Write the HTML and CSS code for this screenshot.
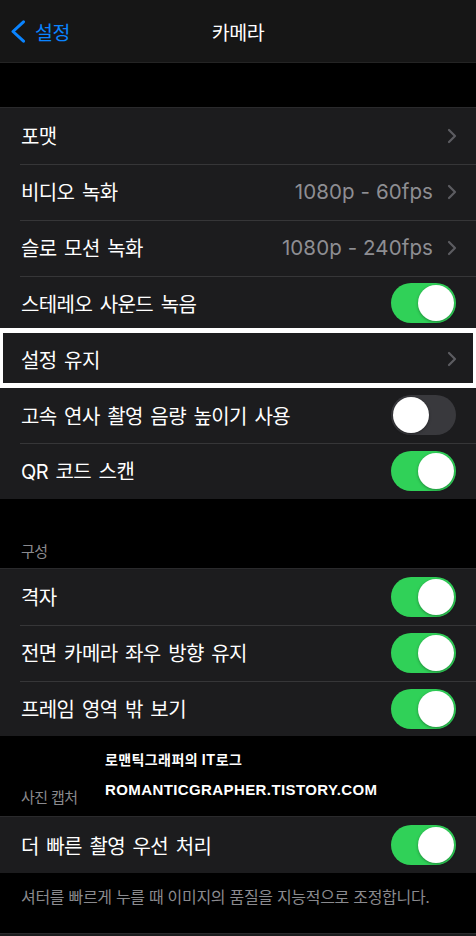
FILE: index.html
```html
<!DOCTYPE html>
<html lang="ko">
<head>
  <meta charset="UTF-8">
  <title>카메라</title>
  <meta name="viewport" content="width=device-width, initial-scale=1.0">
  <link rel="stylesheet" href="styles.css">
</head>
<body>
  <div class="nav">
    <div class="back">
      <svg width="16" height="23" viewBox="0 0 16 23"><path d="M13.5 1.8 L3 11.5 L13.5 21.2" fill="none" stroke="#0a84ff" stroke-width="3" stroke-linecap="round" stroke-linejoin="round"/></svg>
      <span>설정</span>
    </div>
    <div class="title">카메라</div>
  </div>

  <div class="gap-top"></div>

  <div class="group">
    <div class="row">
      <span class="label">포맷</span>
      <svg class="chev" width="10" height="16" viewBox="0 0 10 16"><path d="M2 2 L8 8 L2 14" fill="none" stroke="#5c5c61" stroke-width="2.2" stroke-linecap="round" stroke-linejoin="round"/></svg>
    </div>
    <div class="row">
      <span class="label">비디오 녹화</span>
      <span class="value">1080p - 60fps</span>
      <svg class="chev" width="10" height="16" viewBox="0 0 10 16"><path d="M2 2 L8 8 L2 14" fill="none" stroke="#5c5c61" stroke-width="2.2" stroke-linecap="round" stroke-linejoin="round"/></svg>
    </div>
    <div class="row">
      <span class="label">슬로 모션 녹화</span>
      <span class="value">1080p - 240fps</span>
      <svg class="chev" width="10" height="16" viewBox="0 0 10 16"><path d="M2 2 L8 8 L2 14" fill="none" stroke="#5c5c61" stroke-width="2.2" stroke-linecap="round" stroke-linejoin="round"/></svg>
    </div>
    <div class="row">
      <span class="label">스테레오 사운드 녹음</span>
      <div class="toggle on"><div class="knob"></div></div>
    </div>
    <div class="row marked">
      <span class="label">설정 유지</span>
      <svg class="chev" width="10" height="16" viewBox="0 0 10 16"><path d="M2 2 L8 8 L2 14" fill="none" stroke="#5c5c61" stroke-width="2.2" stroke-linecap="round" stroke-linejoin="round"/></svg>
    </div>
    <div class="row">
      <span class="label">고속 연사 촬영 음량 높이기 사용</span>
      <div class="toggle"><div class="knob"></div></div>
    </div>
    <div class="row">
      <span class="label">QR 코드 스캔</span>
      <div class="toggle on"><div class="knob"></div></div>
    </div>
  </div>

  <div class="header header-a">구성</div>

  <div class="group">
    <div class="row">
      <span class="label">격자</span>
      <div class="toggle on"><div class="knob"></div></div>
    </div>
    <div class="row">
      <span class="label">전면 카메라 좌우 방향 유지</span>
      <div class="toggle on"><div class="knob"></div></div>
    </div>
    <div class="row">
      <span class="label">프레임 영역 밖 보기</span>
      <div class="toggle on"><div class="knob"></div></div>
    </div>
  </div>

  <div class="header header-b">
    사진 캡처
    <div class="stamp">
      <div class="stamp-ko">로맨틱그래퍼의 IT로그</div>
      <div class="stamp-en">ROMANTICGRAPHER.TISTORY.COM</div>
    </div>
  </div>

  <div class="group">
    <div class="row">
      <span class="label">더 빠른 촬영 우선 처리</span>
      <div class="toggle on"><div class="knob"></div></div>
    </div>
  </div>

  <div class="footer">셔터를 빠르게 누를 때 이미지의 품질을 지능적으로 조정합니다.</div>

  <div class="group group-tail"></div>
</body>
</html>
```

FILE: styles.css
```css
body {
  margin: 0;
  background: #000;
  color: #fff;
  font-family: "Inter", "Noto Sans CJK KR", sans-serif;
  width: 476px;
  height: 936px;
  overflow: hidden;
}

.nav {
  height: 62px;
  background: #161616;
  border-bottom: 1px solid #242424;
  display: flex;
  align-items: center;
  justify-content: center;
  position: relative;
}

.back {
  position: absolute;
  left: 10px;
  top: 0;
  height: 62px;
  display: flex;
  align-items: center;
  gap: 9px;
  color: #0a84ff;
  font-size: 19.5px;
  letter-spacing: -0.4px;
}

.title {
  font-size: 19.5px;
  font-weight: 400;
  letter-spacing: -0.4px;
}

.gap-top {
  height: 44px;
}

.group {
  background: #1c1c1e;
  border-top: 1px solid #2a2a2c;
}

.row {
  height: 55.85px;
  box-sizing: border-box;
  display: flex;
  align-items: center;
  padding: 0 20px 0 21px;
  position: relative;
}

.row + .row::before {
  content: "";
  position: absolute;
  left: 20px;
  right: 0;
  top: 0;
  height: 1px;
  background: #363638;
}

.label {
  flex: 1;
  font-size: 20px;
  letter-spacing: -0.6px;
  word-spacing: 2.5px;
  white-space: nowrap;
}

.value {
  color: #8e8e93;
  font-size: 20.5px;
  letter-spacing: 0.1px;
  margin-right: 14px;
}

.chev {
  display: block;
  margin-right: -1px;
}

.toggle {
  width: 65px;
  height: 40px;
  box-sizing: border-box;
  border-radius: 20px;
  padding: 2px;
  background: #39393d;
  display: flex;
  justify-content: flex-start;
}

.toggle.on {
  background: #30d158;
  justify-content: flex-end;
}

.knob {
  width: 36px;
  height: 36px;
  border-radius: 50%;
  background: #fff;
  box-shadow: 0 1px 3px rgba(0, 0, 0, 0.35);
}

.marked::after {
  content: "";
  position: absolute;
  left: 0;
  right: 0;
  top: -3px;
  bottom: -1px;
  border: solid #fff;
  border-width: 5px 3px;
  z-index: 2;
}

.header {
  color: #8a8a8e;
  font-size: 15px;
  letter-spacing: -0.6px;
  padding-left: 21px;
  box-sizing: border-box;
  display: flex;
  align-items: flex-end;
}

.header-a {
  height: 69px;
  padding-bottom: 7px;
}

.header-b {
  height: 80px;
  padding-bottom: 9px;
  position: relative;
}

.stamp {
  position: absolute;
  left: 105px;
  top: 16px;
  color: #fff;
}

.stamp-ko {
  font-size: 14px;
  font-weight: 700;
  letter-spacing: 0.4px;
  line-height: 16px;
}

.stamp-en {
  margin-top: 14px;
  font-family: "Liberation Sans", sans-serif;
  font-size: 15px;
  font-weight: 700;
  letter-spacing: 0.4px;
  line-height: 16px;
}

.footer {
  height: 60px;
  box-sizing: border-box;
  padding: 11px 0 0 21px;
  color: #8a8a8e;
  font-size: 16px;
  letter-spacing: -0.3px;
}

.group-tail {
  height: 10px;
}
```
